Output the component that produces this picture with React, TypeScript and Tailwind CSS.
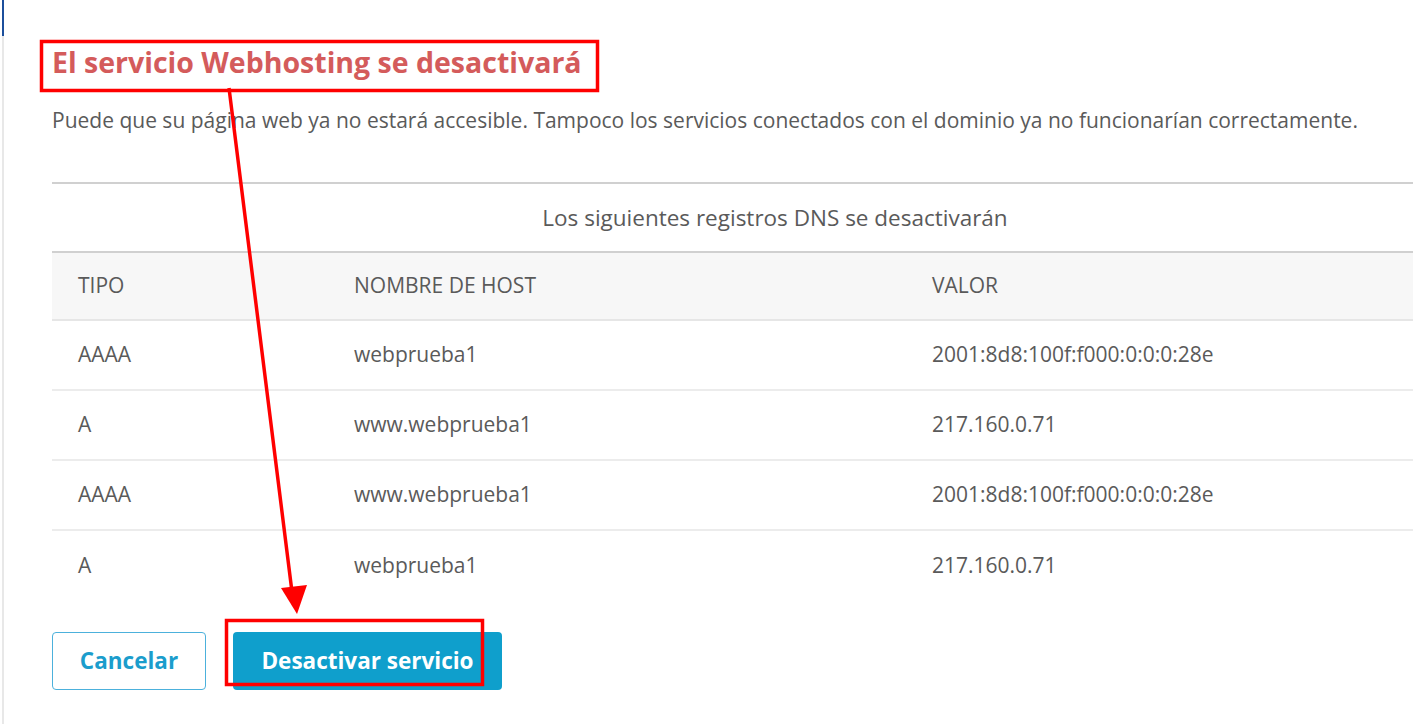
import React from 'react';

const rows = [
  { tipo: 'AAAA', host: 'webprueba1', valor: '2001:8d8:100f:f000:0:0:0:28e' },
  { tipo: 'A', host: 'www.webprueba1', valor: '217.160.0.71' },
  { tipo: 'AAAA', host: 'www.webprueba1', valor: '2001:8d8:100f:f000:0:0:0:28e' },
  { tipo: 'A', host: 'webprueba1', valor: '217.160.0.71' },
];

// red annotation marks drawn on top of the screenshot
function Annotations() {
  return (
    <svg className="pointer-events-none absolute inset-0" width="1413" height="724" viewBox="0 0 1413 724">
      <rect x="41.5" y="41.5" width="556" height="49" fill="none" stroke="#ff0000" strokeWidth="3.5" />
      <line x1="229" y1="88" x2="292" y2="592" stroke="#ff0000" strokeWidth="3.5" />
      <polygon points="281,588 307,585 297,614" fill="#ff0000" />
      <rect x="226.5" y="620.5" width="256" height="64" fill="none" stroke="#ff0000" strokeWidth="3.5" />
    </svg>
  );
}

export default function App() {
  return (
    <div className="relative flex h-[724px] w-[1413px] overflow-hidden bg-white font-['Open_Sans',sans-serif] text-[#5a5a5a]">
      {/* left rail */}
      <div className="ml-[2px] flex w-[2px] shrink-0 flex-col">
        <div className="h-[36px] bg-[#1c4f9c]"></div>
        <div className="flex-1 bg-[#e8e8e8]"></div>
      </div>

      <div className="flex shrink-0 flex-col pl-[48px] pt-[44px]">
        <h1 className="text-[28.5px] font-bold leading-[36px] text-[#d45b5b]">El servicio Webhosting se desactivará</h1>
        <p className="mt-[26px] whitespace-nowrap text-[21px] leading-[28px]">
          Puede que su página web ya no estará accesible. Tampoco los servicios conectados con el dominio ya no funcionarían correctamente.
        </p>

        <div className="mt-[48px] w-[1446px] border-t-2 border-[#d0d0d0] text-[21px]">
          <div className="flex h-[67px] items-center justify-center text-[22.5px]">Los siguientes registros DNS se desactivarán</div>
          <div className="grid h-[70px] grid-cols-[276px_578px_1fr] items-center border-y-2 border-t-[#d0d0d0] border-b-[#e6e6e6] bg-[#f7f7f7] uppercase">
            <div className="pl-[26px]">Tipo</div>
            <div className="pl-[26px]">Nombre de host</div>
            <div className="pl-[26px]">Valor</div>
          </div>
          {rows.map((r, i) => (
            <div
              key={i}
              className="grid h-[70px] grid-cols-[276px_578px_1fr] items-center border-b-2 border-[#ececec] last:border-b-0"
            >
              <div className="pl-[26px]">{r.tipo}</div>
              <div className="pl-[26px]">{r.host}</div>
              <div className="pl-[26px]">{r.valor}</div>
            </div>
          ))}
        </div>

        <div className="mt-[31px] flex gap-[27px]">
          <button className="h-[58px] w-[154px] rounded-[4px] border border-[#4cb1dc] bg-white text-[22.5px] font-bold text-[#1b9dcc]">
            Cancelar
          </button>
          <button className="h-[58px] w-[269px] rounded-[4px] bg-[#0f9fcc] text-[22.5px] font-bold text-white">
            Desactivar servicio
          </button>
        </div>
      </div>

      <Annotations />
    </div>
  );
}
